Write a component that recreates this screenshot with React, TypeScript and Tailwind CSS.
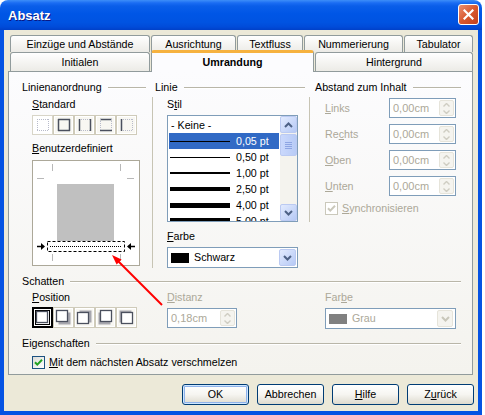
import React from 'react';

const U = ({ children }: { children: React.ReactNode }) => (
  <span className="underline underline-offset-[1px]">{children}</span>
);

const GroupHead = ({ title, className = '' }: { title: React.ReactNode; className?: string }) => (
  <div className={`flex items-center h-[13px] ${className}`}>
    <span className="whitespace-nowrap">{title}</span>
    <div className="flex-1 ml-[6px] h-[2px] border-t border-t-[#b9b6a8] border-b border-b-white" />
  </div>
);

const Tab = ({ label, w, h }: { label: string; w: string; h: string }) => (
  <div
    className={`${w} ${h} flex items-center justify-center border border-b-0 border-[#919b9c] rounded-t-[3px] bg-gradient-to-b from-white to-[#ecebe6] whitespace-nowrap`}
  >
    {label}
  </div>
);

const BlueArrowBtn = ({ dir, className = '' }: { dir: 'up' | 'down'; className?: string }) => (
  <div
    className={`flex items-center justify-center rounded-[2px] border border-[#bbcaf2] bg-gradient-to-br from-[#e3ebfe] to-[#b6c9f5] ${className}`}
  >
    <svg width="9" height="6" viewBox="0 0 9 6">
      <path
        d={dir === 'up' ? 'M1 5 L4.5 1.5 L8 5' : 'M1 1 L4.5 4.5 L8 1'}
        fill="none"
        stroke="#4d6185"
        strokeWidth="2"
      />
    </svg>
  </div>
);

const GreyArrowBtn = ({ className = '' }: { className?: string }) => (
  <div className={`flex items-center justify-center rounded-[2px] border border-[#e6e4da] bg-[#f5f4ef] ${className}`}>
    <svg width="9" height="6" viewBox="0 0 9 6">
      <path d="M1 1 L4.5 4.5 L8 1" fill="none" stroke="#c9c7ba" strokeWidth="2" />
    </svg>
  </div>
);

const Spin = ({ value, w }: { value: string; w: string }) => (
  <div className={`${w} h-[20px] flex items-stretch border border-[#7f9db9] bg-white`}>
    <span className="flex-1 flex items-center pl-[3px] text-[#aca899] text-[11px]">{value}</span>
    <div className="w-[15px] my-[1px] mr-[1px] flex flex-col rounded-[2px] border border-[#e6e4da] bg-[#f5f4ef]">
      <div className="flex-1 flex items-center justify-center">
        <svg width="7" height="4" viewBox="0 0 7 4">
          <path d="M0.5 3.5 L3.5 0.5 L6.5 3.5" fill="none" stroke="#cfcdc2" strokeWidth="1.4" />
        </svg>
      </div>
      <div className="flex-1 flex items-center justify-center">
        <svg width="7" height="4" viewBox="0 0 7 4">
          <path d="M0.5 0.5 L3.5 3.5 L6.5 0.5" fill="none" stroke="#cfcdc2" strokeWidth="1.4" />
        </svg>
      </div>
    </div>
  </div>
);

const BorderIcon = ({ sides }: { sides: string }) => {
  const dark = '#4b505e';
  const light = '#b8bbca';
  const seg = (k: string, x1: number, y1: number, x2: number, y2: number) => {
    const on = sides.includes(k);
    return (
      <line
        x1={x1}
        y1={y1}
        x2={x2}
        y2={y2}
        stroke={on ? dark : light}
        strokeWidth={on ? 1.5 : 1}
        strokeDasharray={on ? undefined : '1 1'}
      />
    );
  };
  return (
    <svg width="14" height="14" viewBox="0 0 14 14">
      {seg('t', 1, 1.5, 13, 1.5)}
      {seg('b', 1, 12.5, 13, 12.5)}
      {seg('l', 1.5, 1, 1.5, 13)}
      {seg('r', 12.5, 1, 12.5, 13)}
    </svg>
  );
};

const ShadowIcon = ({ pos }: { pos: string }) => {
  const off: Record<string, [number, number]> = {
    none: [0, 0],
    br: [2, 2],
    tr: [2, -2],
    bl: [-2, 2],
    tl: [-2, -2],
  };
  const [dx, dy] = off[pos];
  const base = pos === 'none' ? 2.5 : 2.5 - dx / 2;
  const baseY = pos === 'none' ? 2.5 : 2.5 - dy / 2;
  return (
    <svg width="17" height="17" viewBox="0 0 17 17">
      {pos !== 'none' && <rect x={base + dx} y={baseY + dy} width="12" height="12" fill="#a7a7ae" />}
      <rect x={base} y={baseY} width="11" height="11" fill="white" stroke="#4b505e" strokeWidth="1.3" />
    </svg>
  );
};

const Preview = () => (
  <div className="w-[108px] h-[106px] border border-[#aca899] bg-white">
    <svg width="106" height="104" viewBox="0 0 106 104">
      <g stroke="#b8b8b8" strokeWidth="1">
        <line x1="19.5" y1="3" x2="19.5" y2="10" />
        <line x1="87.5" y1="3" x2="87.5" y2="10" />
        <line x1="4" y1="17.5" x2="11" y2="17.5" />
        <line x1="94" y1="17.5" x2="101" y2="17.5" />
        <line x1="19.5" y1="93" x2="19.5" y2="100" />
        <line x1="87.5" y1="93" x2="87.5" y2="100" />
      </g>
      <rect x="24" y="23" width="57" height="57" fill="#c0c0c0" />
      <rect x="14.5" y="80.5" width="77" height="10" fill="white" stroke="#000" strokeWidth="1" strokeDasharray="3 2" />
      <line x1="17" y1="85.5" x2="89" y2="85.5" stroke="#000" strokeWidth="1" strokeDasharray="1 1" />
      <line x1="4" y1="85.5" x2="9" y2="85.5" stroke="#000" strokeWidth="1.5" />
      <polygon points="8,82 12,85.5 8,89" fill="#000" />
      <line x1="97" y1="85.5" x2="102" y2="85.5" stroke="#000" strokeWidth="1.5" />
      <polygon points="98,82 94,85.5 98,89" fill="#000" />
    </svg>
  </div>
);

const CheckBox = ({ disabled }: { disabled?: boolean }) => (
  <div
    className={`w-[13px] h-[13px] flex items-center justify-center border ${
      disabled ? 'border-[#cac8bb] bg-white' : 'border-[#1c5180] bg-gradient-to-br from-[#dcdcd7] to-white'
    }`}
  >
    <svg width="9" height="9" viewBox="0 0 9 9">
      <path d="M1 4.2 L3.3 6.6 L8 1.8" fill="none" stroke={disabled ? '#cac8bb' : '#21a121'} strokeWidth="2" />
    </svg>
  </div>
);

const XpButton = ({ children, def }: { children: React.ReactNode; def?: boolean }) => (
  <div
    className={`w-[67px] h-[21px] flex items-center justify-center rounded-[3px] border border-[#003c74] bg-gradient-to-b from-white via-[#f6f5f1] to-[#dedace] ${
      def ? 'shadow-[inset_0_0_0_1px_#cee7ff,inset_0_0_0_2px_#8fb2ea]' : ''
    }`}
  >
    {children}
  </div>
);

const lineRows = [
  { label: '0,05 pt', h: 'h-[1px]' },
  { label: '0,50 pt', h: 'h-[1px]' },
  { label: '1,00 pt', h: 'h-[2px]' },
  { label: '2,50 pt', h: 'h-[4px]' },
  { label: '4,00 pt', h: 'h-[5px]' },
  { label: '5,00 pt', h: 'h-[6px]' },
];

const StyleList = () => (
  <div className="w-[131px] h-[107px] flex border border-[#7f9db9] bg-white overflow-hidden">
    <div className="flex-1 pt-[1px] overflow-hidden">
      <div className="h-[16px] flex items-center pl-[3px]">- Keine -</div>
      {lineRows.map((r, i) => (
        <div
          key={r.label}
          className={`h-[16px] mx-[1px] flex items-center pl-[1px] ${i === 0 ? 'bg-[#316ac5] text-white' : ''}`}
        >
          <div className={`w-[60px] ${r.h} bg-black`} />
          <span className="ml-[6px] whitespace-nowrap">{r.label}</span>
        </div>
      ))}
    </div>
    <div className="w-[17px] flex flex-col bg-[#f4f3ee]">
      <BlueArrowBtn dir="up" className="h-[17px]" />
      <div className="h-[22px] mt-[1px] rounded-[2px] border border-[#bbcaf2] bg-gradient-to-r from-[#cad8fc] to-[#b8cbf6] flex flex-col items-center justify-center gap-[1px]">
        <div className="w-[7px] h-[1px] bg-[#8ea5e3]" />
        <div className="w-[7px] h-[1px] bg-[#8ea5e3]" />
        <div className="w-[7px] h-[1px] bg-[#8ea5e3]" />
        <div className="w-[7px] h-[1px] bg-[#8ea5e3]" />
      </div>
      <div className="flex-1" />
      <BlueArrowBtn dir="down" className="h-[17px]" />
    </div>
  </div>
);

const TitleBar = () => (
  <div className="h-[30px] flex items-center justify-between rounded-t-[8px] bg-[linear-gradient(to_bottom,#3d8ef8_0%,#1a6cf3_10%,#0a5ee9_20%,#0056e6_45%,#0053e1_75%,#004bd9_90%,#0040c8_100%)]">
    <span className="pl-[8px] text-[13px] font-bold text-white [text-shadow:1px_1px_#0a1883]">Absatz</span>
    <div className="mr-[3px] mb-[1px] w-[21px] h-[21px] rounded-[3px] border border-white bg-gradient-to-br from-[#ea8f70] via-[#d8582f] to-[#c2401c] flex items-center justify-center">
      <svg width="11" height="11" viewBox="0 0 11 11">
        <path d="M1.5 1.5 L9.5 9.5 M9.5 1.5 L1.5 9.5" stroke="white" strokeWidth="2.2" strokeLinecap="square" />
      </svg>
    </div>
  </div>
);

export default function App() {
  return (
    <div className="relative w-[485px] h-[415px] bg-white overflow-hidden font-['Liberation_Sans',Arial,sans-serif] text-[10.7px] leading-[13px] text-black">
      <div className="w-[482px] h-[415px] flex flex-col">
        <TitleBar />
        <div className="flex-1 flex flex-col bg-[#ece9d8] border-x-4 border-b-4 border-[#0553e3]">
          {/* tab rows */}
          <div className="pt-[5px] pl-[6px]">
            <div className="h-[17px] flex gap-[1px]">
              <Tab label="Einzüge und Abstände" w="w-[140px]" h="h-[17px]" />
              <Tab label="Ausrichtung" w="w-[85px]" h="h-[17px]" />
              <Tab label="Textfluss" w="w-[66px]" h="h-[17px]" />
              <Tab label="Nummerierung" w="w-[99px]" h="h-[17px]" />
              <Tab label="Tabulator" w="w-[69px]" h="h-[17px]" />
            </div>
            <div className="h-[19px] flex items-end gap-[1px]">
              <Tab label="Initialen" w="w-[140px]" h="h-[19px]" />
              <div className="relative z-10 w-[163px] h-[22px] -mb-[1px] flex items-center justify-center pb-[1px] border border-b-0 border-[#919b9c] border-t-[3px] border-t-[#f6b23f] rounded-t-[3px] bg-[#fcfcfe] font-bold">
                Umrandung
              </div>
              <Tab label="Hintergrund" w="w-[158px]" h="h-[19px]" />
            </div>
          </div>

          {/* panel */}
          <div className="ml-[4px] w-[465px] h-[304px] flex flex-col border border-[#919b9c] bg-gradient-to-b from-[#fcfcfe] to-[#f4f3ee] pl-[13px] pt-[9px]">
            <div className="flex">
              {/* Linienanordnung */}
              <div className="w-[130px]">
                <GroupHead title="Linienanordnung" className="pr-[6px]" />
                <div className="pl-[10px]">
                  <div className="mt-[4px] h-[13px]">
                    <U>S</U>tandard
                  </div>
                  <div className="mt-[4px] flex">
                    {['', 'ltrb', 'lr', 'tb', 'l'].map((s, i) => (
                      <div
                        key={i}
                        className={`w-[21px] h-[20px] flex items-center justify-center border ${
                          i === 0 ? 'border-[#d8d5c8] bg-white' : 'border-[#cfcbba] bg-[#f8f7f2]'
                        } shadow-[inset_0_0_0_1px_#ffffff]`}
                      >
                        <BorderIcon sides={s} />
                      </div>
                    ))}
                  </div>
                  <div className="mt-[7px] h-[13px]">
                    <U>B</U>enutzerdefiniert
                  </div>
                  <div className="mt-[5px]">
                    <Preview />
                  </div>
                </div>
              </div>

              {/* Linie */}
              <div className="w-[157px]">
                <GroupHead title="Linie" className="pl-[3px] pr-[4px]" />
                <div className="mt-[3px] border-l border-[#c7c4b4] pl-[14px] pt-[1px]">
                  <div className="h-[13px]">
                    S<U>t</U>il
                  </div>
                  <div className="mt-[4px]">
                    <StyleList />
                  </div>
                  <div className="mt-[8px] h-[13px]">
                    <U>F</U>arbe
                  </div>
                  <div className="mt-[4px] w-[131px] h-[21px] flex items-stretch border border-[#7f9db9] bg-white">
                    <div className="ml-[3px] self-center w-[18px] h-[10px] bg-black" />
                    <span className="ml-[5px] flex-1 flex items-center">Schwarz</span>
                    <BlueArrowBtn dir="down" className="w-[17px] m-[1px]" />
                  </div>
                </div>
              </div>

              {/* Abstand zum Inhalt */}
              <div className="flex-1">
                <GroupHead title="Abstand zum Inhalt" className="pl-[6px] pr-[11px]" />
                <div className="mt-[3px] border-l border-[#c7c4b4] pl-[15px] pt-[1px] pb-[7px] text-[#aca899]">
                  <div className="flex flex-col gap-[6px]">
                    {[
                      [<><U>L</U>inks</>, 'l'],
                      [<>Re<U>c</U>hts</>, 'r'],
                      [<><U>O</U>ben</>, 'o'],
                      [<><U>U</U>nten</>, 'u'],
                    ].map(([label, k]) => (
                      <div key={k as string} className="h-[20px] flex items-center">
                        <span className="w-[64px]">{label}</span>
                        <Spin value="0,00cm" w="w-[67px]" />
                      </div>
                    ))}
                  </div>
                  <div className="mt-[6px] flex items-center">
                    <CheckBox disabled />
                    <span className="ml-[4px]">
                      <U>S</U>ynchronisieren
                    </span>
                  </div>
                </div>
              </div>
            </div>

            {/* Schatten */}
            <GroupHead title="Schatten" className="mt-[7px] pr-[11px]" />
            <div className="mt-[3px] pl-[10px] flex">
              <div className="w-[135px]">
                <div className="h-[13px]">
                  <U>P</U>osition
                </div>
                <div className="mt-[3px] flex">
                  {['none', 'br', 'tr', 'bl', 'tl'].map((p, i) => (
                    <div
                      key={p}
                      className={`w-[21px] h-[21px] flex items-center justify-center ${
                        i === 0
                          ? 'border-2 border-black shadow-[inset_0_0_0_1px_#ffffff,inset_0_0_0_2px_#000000] bg-white'
                          : 'border border-[#cfcbba] bg-[#f8f7f2] shadow-[inset_0_0_0_1px_#ffffff]'
                      }`}
                    >
                      <ShadowIcon pos={p} />
                    </div>
                  ))}
                </div>
              </div>
              <div className="w-[158px] text-[#aca899]">
                <div className="h-[13px]">
                  <U>D</U>istanz
                </div>
                <div className="mt-[4px]">
                  <Spin value="0,18cm" w="w-[70px]" />
                </div>
              </div>
              <div className="text-[#aca899]">
                <div className="h-[13px]">
                  Far<U>b</U>e
                </div>
                <div className="mt-[4px] w-[131px] h-[21px] flex items-stretch border border-[#7f9db9] bg-white">
                  <div className="ml-[3px] self-center w-[18px] h-[10px] bg-[#808080]" />
                  <span className="ml-[5px] flex-1 flex items-center">Grau</span>
                  <GreyArrowBtn className="w-[16px] my-[1px] mr-[2px]" />
                </div>
              </div>
            </div>

            {/* Eigenschaften */}
            <GroupHead title="Eigenschaften" className="mt-[8px] pr-[11px]" />
            <div className="mt-[6px] pl-[10px] flex items-center">
              <CheckBox />
              <span className="ml-[4px]">
                <U>M</U>it dem nächsten Absatz verschmelzen
              </span>
            </div>
          </div>

          {/* buttons */}
          <div className="mt-[9px] pr-[4px] flex justify-end gap-[8px]">
            <XpButton def>OK</XpButton>
            <XpButton>Abbrechen</XpButton>
            <XpButton>
              <U>H</U>ilfe
            </XpButton>
            <XpButton>
              Z<U>u</U>rück
            </XpButton>
          </div>
        </div>
      </div>

      {/* red annotation arrow */}
      <svg className="absolute left-0 top-0 pointer-events-none" width="485" height="415" viewBox="0 0 485 415">
        <line x1="162" y1="305" x2="117" y2="260" stroke="#ff0000" strokeWidth="2" />
        <polygon points="112,255 121.6,259.6 116.6,264.6" fill="#ff0000" />
      </svg>
    </div>
  );
}
